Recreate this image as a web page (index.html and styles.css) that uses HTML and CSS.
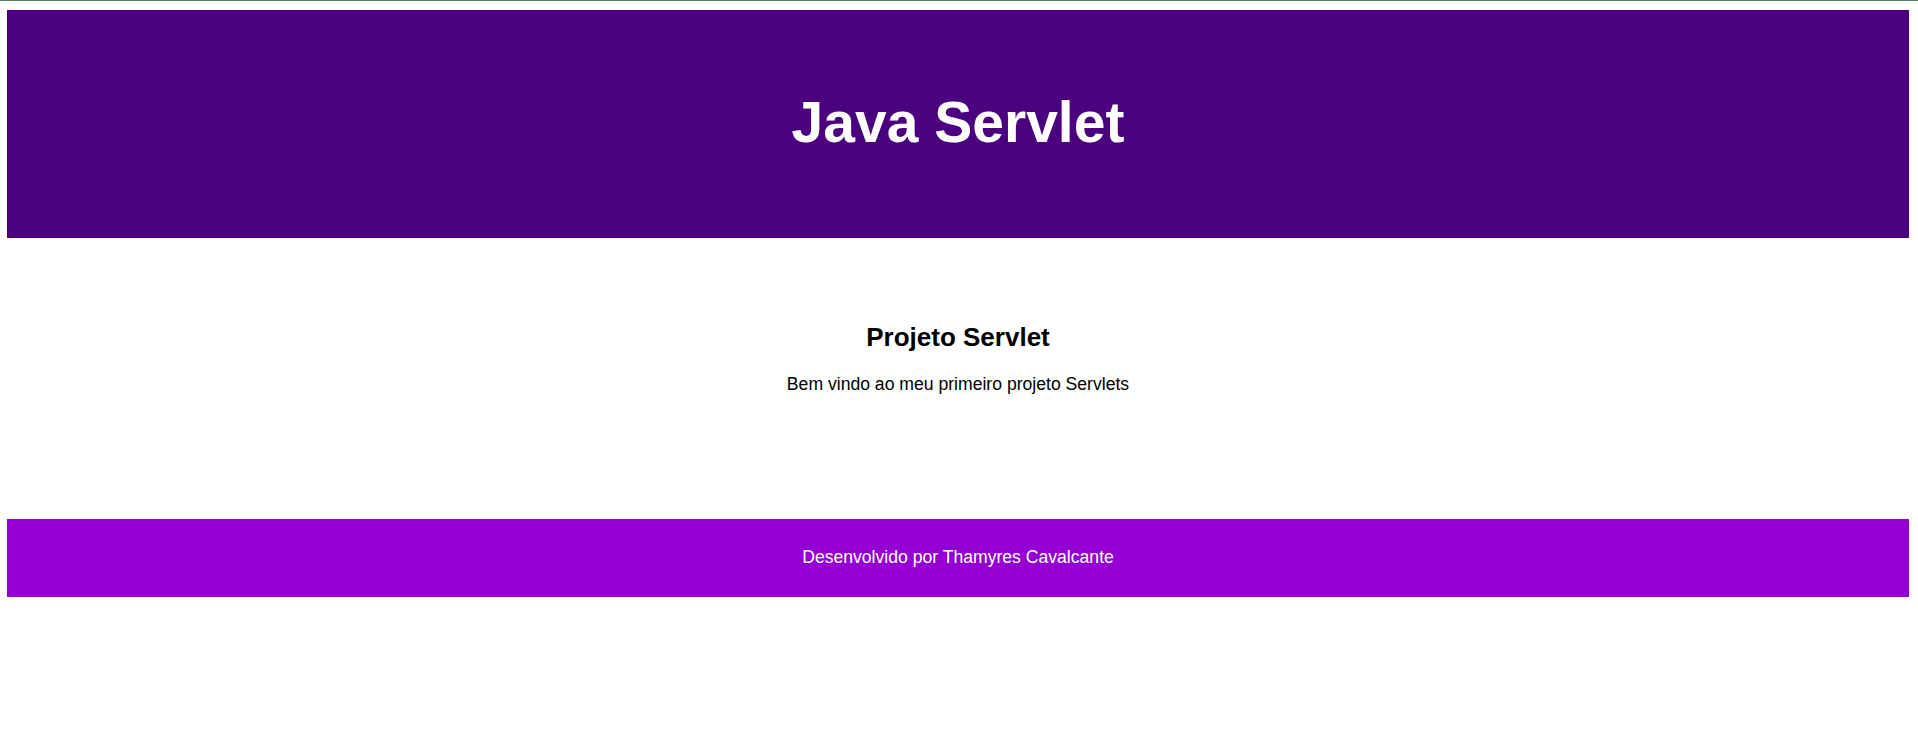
FILE: index.html
```html
<!DOCTYPE html>
<html lang="pt-BR">
<head>
<meta charset="utf-8">
<title>Java Servlet</title>
<link rel="stylesheet" href="styles.css">
</head>
<body>
<div class="page">
  <header class="site-header">
    <h1 class="site-title">Java Servlet</h1>
  </header>
  <main class="content">
    <h2 class="content-title">Projeto Servlet</h2>
    <p class="content-text">Bem vindo ao meu primeiro projeto Servlets</p>
  </main>
  <footer class="site-footer">
    <p class="footer-text">Desenvolvido por Thamyres Cavalcante</p>
  </footer>
</div>
</body>
</html>
```
FILE: styles.css
```css
html, body {
  margin: 0;
  padding: 0;
  background: #ffffff;
}
body {
  border-top: 1px solid #4f7f5f;
  font-family: "Liberation Sans", Arial, sans-serif;
}
.page {
  padding: 9px 9px 0 7px;
}
.site-header {
  background: #4b0080;
  height: 228px;
  box-sizing: border-box;
  padding-bottom: 2px;
  display: flex;
  align-items: center;
  justify-content: center;
}
.site-title {
  margin: 0;
  color: #ffffff;
  font-size: 57px;
  font-weight: bold;
  line-height: 1.15;
}
.content {
  height: 281px;
  box-sizing: border-box;
  padding-top: 84px;
  text-align: center;
}
.content-title {
  margin: 0;
  font-size: 26px;
  font-weight: bold;
  line-height: 30px;
  color: #000000;
}
.content-text {
  margin: 22px 0 0;
  font-size: 17.6px;
  line-height: 20px;
  color: #000000;
}
.site-footer {
  background: #9400d3;
  height: 78px;
  box-sizing: border-box;
  padding-top: 28px;
  text-align: center;
}
.footer-text {
  margin: 0;
  color: #ffffff;
  font-size: 17.6px;
  line-height: 20px;
}
```
